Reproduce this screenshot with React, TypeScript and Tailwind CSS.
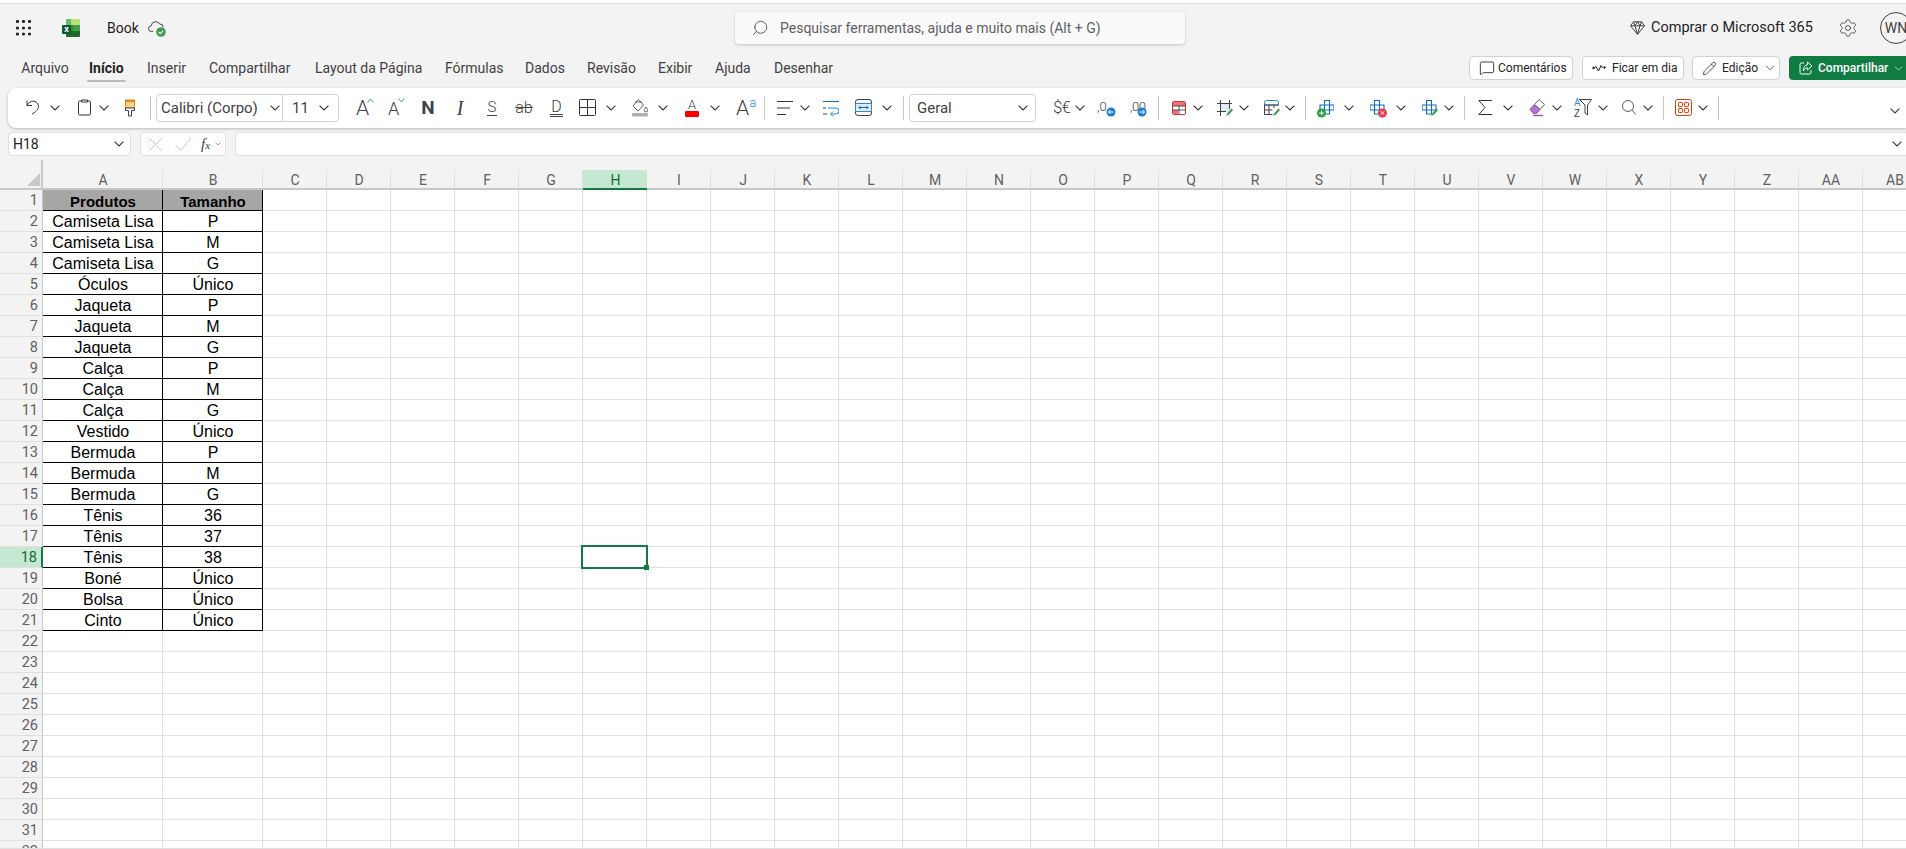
import { Search, Settings, Pencil, MessageSquare, ChevronDown } from "lucide-react";

const TABS = [
  { label: "Arquivo", cls: "w-[48px] ml-[21px]" },
  { label: "Início", cls: "w-[34px] ml-[20px] font-bold text-[#242424]" },
  { label: "Inserir", cls: "w-[38px] ml-[24px]" },
  { label: "Compartilhar", cls: "w-[80px] ml-[24px]" },
  { label: "Layout da Página", cls: "w-[105px] ml-[26px]" },
  { label: "Fórmulas", cls: "w-[56px] ml-[25px]" },
  { label: "Dados", cls: "w-[38px] ml-[24px]" },
  { label: "Revisão", cls: "w-[46px] ml-[24px]" },
  { label: "Exibir", cls: "w-[33px] ml-[25px]" },
  { label: "Ajuda", cls: "w-[35px] ml-[24px]" },
  { label: "Desenhar", cls: "w-[58px] ml-[24px]" },
];

const COLUMNS = "CDEFGHIJKLMNOPQRSTUVWXYZ".split("").concat(["AA", "AB"]);

const DATA = [
  ["Produtos", "Tamanho"],
  ["Camiseta Lisa", "P"],
  ["Camiseta Lisa", "M"],
  ["Camiseta Lisa", "G"],
  ["Óculos", "Único"],
  ["Jaqueta", "P"],
  ["Jaqueta", "M"],
  ["Jaqueta", "G"],
  ["Calça", "P"],
  ["Calça", "M"],
  ["Calça", "G"],
  ["Vestido", "Único"],
  ["Bermuda", "P"],
  ["Bermuda", "M"],
  ["Bermuda", "G"],
  ["Tênis", "36"],
  ["Tênis", "37"],
  ["Tênis", "38"],
  ["Boné", "Único"],
  ["Bolsa", "Único"],
  ["Cinto", "Único"],
];

const ROWS = Array.from({ length: 32 }, (_, i) => i + 1);

function Chev({ className = "" }: { className?: string }) {
  return (
    <svg width="10" height="6" viewBox="0 0 10 6" className={`shrink-0 ${className}`} fill="none" stroke="#333333" strokeWidth="1.1">
      <path d="M.6.6L5 5l4.400-4.400" />
    </svg>
  );
}

function Sep({ className = "" }: { className?: string }) {
  return <div className={`h-6 w-px shrink-0 bg-[#c8c8c8] ${className}`} />;
}

function Ic({ w, className = "", children }: { w: number; className?: string; children: React.ReactNode }) {
  return (
    <svg width={w} height="20" viewBox={`0 0 ${w} 20`} fill="none" className={`shrink-0 ${className}`}>
      {children}
    </svg>
  );
}

function GreenPencil({ x, y }: { x: number; y: number }) {
  return <path d={`M${x} ${y + 7}l1.5-3 4-4.5 1.6 1.4-4 4.6z`} fill="#3f9b4b" />;
}

function CrossOutline({ x = 3 }: { x?: number }) {
  return (
    <path
      d={`M${x + 4.5} 2.5h5v4.5h4.5v5h-4.5v4h-5v-4h-4.5v-5h4.5z M${x + 4.5} 7h5v5h-5z`}
      stroke="#0f6cbd"
      strokeWidth="1.1"
    />
  );
}

function Cell({ text, bold, last }: { text: string; bold?: boolean; last?: boolean }) {
  return (
    <div
      className={`flex h-full shrink-0 items-center justify-center border-r border-b border-black pl-[1px] pt-[2px] font-['Liberation_Sans',Arial,sans-serif] leading-none text-black ${
        bold ? "bg-[#a6a6a6] text-[15px] font-bold" : "bg-white text-[16px]"
      } ${last ? "w-[100px]" : "w-[120px]"}`}
    >
      {text}
    </div>
  );
}

export default function App() {
  return (
    <div className="flex h-[849px] w-[1906px] flex-col overflow-hidden bg-[#f3f3f3] font-['Roboto',sans-serif] text-[14px] text-[#424242]">
      <div className="h-[4px] shrink-0 border-b border-[#e0e0e0] bg-white" />

      {/* Title bar */}
      <div className="relative flex h-[48px] shrink-0 items-center">
        <svg width="16" height="16" viewBox="0 0 16 16" className="ml-[16px] shrink-0" fill="#242424">
          {[1.5, 8, 14].map((cy) =>
            [1.5, 7.5, 13.5].map((cx) => <circle key={`${cx}-${cy}`} cx={cx} cy={cy} r="1.6" />),
          )}
        </svg>
        <svg width="18" height="18" viewBox="0 0 18 18" className="ml-[30px] shrink-0">
          <path d="M4 1a1 1 0 0 1 1-1h4.5v6H4z" fill="#5fbf64" />
          <path d="M9.5 0H17a1 1 0 0 1 1 1v5H9.5z" fill="#b4e36f" />
          <rect x="4" y="6" width="7" height="6" fill="#2e8b3d" />
          <rect x="11" y="6" width="7" height="6" fill="#3f9f45" />
          <path d="M4 12h14v5a1 1 0 0 1-1 1H5a1 1 0 0 1-1-1z" fill="#1c6b2d" />
          <rect x="0" y="6" width="9" height="9" rx="1" fill="#0e5a30" />
          <text x="4.5" y="13.4" fontSize="9" fontWeight="700" fill="#fff" textAnchor="middle" fontFamily="Roboto, sans-serif">x</text>
        </svg>
        <span className="ml-[27px] w-[32px] text-[14px] text-[#242424]">Book</span>
        <svg width="18" height="18" viewBox="0 0 18 18" className="ml-[9px] shrink-0" fill="none">
          <path d="M5 12.5H3.6a2.9 2.9 0 0 1-.3-5.8A4.4 4.4 0 0 1 11.6 5a3.3 3.3 0 0 1 3.6 3" stroke="#424242" strokeWidth="1" />
          <circle cx="13" cy="13" r="4.8" fill="#3f9b57" />
          <path d="M10.8 13l1.6 1.6 2.8-3" stroke="#fff" strokeWidth="1.1" />
        </svg>

        {/* Search box sits in the middle of the bar */}
        <div className="absolute left-[735px] top-[8px] flex h-[32px] w-[450px] items-center rounded-[4px] bg-[#fafafa] shadow-[0_1px_3px_rgba(0,0,0,0.2)]">
          <Search size={18} strokeWidth={1.1} className="ml-[16px] -scale-x-100 text-[#424242]" />
          <span className="ml-[11px] whitespace-nowrap text-[14px] text-[#616161]">
            Pesquisar ferramentas, ajuda e muito mais (Alt + G)
          </span>
        </div>

        <div className="ml-auto flex items-center">
          <svg width="15" height="14" viewBox="0 0 15 14" fill="none" stroke="#424242" strokeWidth="1">
            <path d="M3.5.8h8l3 4-7 8.5-7-8.5z M.5 4.8h14 M5 4.8l2.5 8.5 2.5-8.5 M3.5.8L5 4.8l2.5-4 2.5 4 1.5-4" />
          </svg>
          <span className="ml-[6px] w-[156px] whitespace-nowrap text-[14.5px] text-[#242424]">Comprar o Microsoft 365</span>
          <Settings size={20} strokeWidth={1} className="ml-[31px] text-[#424242]" />
          <div className="-mr-[6px] ml-[22px] flex h-[32px] w-[32px] items-center justify-center rounded-full border border-[#424242] text-[14px] text-[#424242]">
            WN
          </div>
        </div>
      </div>

      {/* Tabs row */}
      <div className="flex h-[36px] shrink-0">
        <div className="flex h-[32px] items-center">
          {TABS.map((tab) => (
            <div key={tab.label} className={`relative shrink-0 whitespace-nowrap text-center ${tab.cls}`}>
              {tab.label}
              {tab.label === "Início" && (
                <div className="absolute -left-[2px] top-[22px] h-[2px] w-[39px] rounded-full bg-[#bdbdbd]" />
              )}
            </div>
          ))}
        </div>
        <div className="ml-auto flex h-[24px] translate-y-[4px] items-center text-[12px] text-[#242424]">
          <div className="flex h-full w-[104px] items-center rounded-[4px] border border-[#d1d1d1] bg-white">
            <MessageSquare size={16} strokeWidth={1.3} className="ml-[9px]" />
            <span className="ml-[3px]">Comentários</span>
          </div>
          <div className="ml-[9px] flex h-full w-[102px] items-center rounded-[4px] border border-[#d1d1d1] bg-white">
            <svg width="14" height="8" viewBox="0 0 14 8" className="ml-[9px]" fill="none" stroke="#242424">
              <circle cx="1.5" cy="4" r=".8" fill="#242424" />
              <path d="M2 4l2-1.5L6.5 7 9 1.5 10.5 4" />
              <circle cx="12.5" cy="3.5" r=".8" fill="#242424" />
            </svg>
            <span className="ml-[6px]">Ficar em dia</span>
          </div>
          <div className="ml-[8px] flex h-full w-[88px] items-center rounded-[4px] border border-[#d1d1d1] bg-white">
            <Pencil size={15} strokeWidth={1.2} className="ml-[9px]" />
            <span className="ml-[5px]">Edição</span>
            <ChevronDown size={14} strokeWidth={1.2} className="ml-[5px]" />
          </div>
          <div className="-mr-[5px] ml-[9px] flex h-full w-[122px] items-center rounded-[4px] bg-[#107c41] font-medium text-white">
            <svg width="14" height="14" viewBox="0 0 14 14" className="ml-[10px]" fill="none" stroke="#fff" strokeWidth="1">
              <path d="M5 2H2.500A1.500 1.500 0 0 0 1 3.500v8A1.500 1.500 0 0 0 2.500 13h8A1.500 1.500 0 0 0 12 11.500V9" />
              <path d="M8.500 1l4.500 4-4.500 4V6.800C6.500 6.800 5 8 4.500 10c-.2-4 1.500-6 4-6.200z" />
            </svg>
            <span className="ml-[5px]">Compartilhar</span>
            <ChevronDown size={13} strokeWidth={1.2} className="ml-[4px]" />
          </div>
        </div>
      </div>

      {/* Ribbon */}
      <div className="ml-[8px] flex h-[40px] shrink-0 items-center rounded-l-[8px] bg-white shadow-[0_1px_3px_rgba(0,0,0,0.25)]">
        <Ic w={14} className="ml-[18px]">
          <path d="M1 2.500v5h5 M1 7.500C3 4 6 2.500 9 3.500c3.500 1.300 4.300 5.500 2.500 8-1 1.500-3 3.200-5.500 4.500" stroke="#333333" />
        </Ic>
        <Chev className="ml-[10px]" />
        <Ic w={13} className="ml-[18px]">
          <path d="M3 3H1.800A1.300 1.300 0 0 0 .5 4.300v11.400A1.300 1.300 0 0 0 1.800 17h9.400a1.300 1.300 0 0 0 1.300-1.300V4.300A1.300 1.300 0 0 0 11.200 3H10 M3.500 2h6v2h-6z" stroke="#333333" />
        </Ic>
        <Chev className="ml-[8px]" />
        <Ic w={10} className="ml-[16px]">
          <rect x=".5" y="2" width="9" height="8" fill="#fbd38a" stroke="#e8861a" />
          <path d="M.5 2h9v2h-9z" fill="#e8861a" />
          <path d="M.5 10h9v2.500H6.500V18h-3v-5.500H.5z" fill="#fff" stroke="#424242" />
        </Ic>
        <Sep className="ml-[15px]" />

        <div className="ml-[5px] flex h-[28px] w-[183px] shrink-0 items-center rounded-[4px] border border-[#d1d1d1] text-[15px]">
          <div className="flex h-full w-[126px] items-center border-r border-[#d1d1d1] pl-[4px]">
            <span className="w-[109px] whitespace-nowrap">Calibri (Corpo)</span>
            <Chev />
          </div>
          <span className="ml-[9px] w-[26px]">11</span>
          <Chev className="ml-[1px]" />
        </div>

        <div className="ml-[17px] flex w-[17px] shrink-0 items-start font-light">
          <span className="text-[21px] leading-none">A</span>
          <svg width="7" height="5" viewBox="0 0 7 5" fill="none" stroke="#2b88d8" className="-ml-[2px] shrink-0"><path d="M.5 4.500L3.500 1l3 3.500" /></svg>
        </div>
        <div className="ml-[15px] flex w-[16px] shrink-0 items-start font-light">
          <span className="mt-[2px] text-[18px] leading-none">A</span>
          <svg width="7" height="5" viewBox="0 0 7 5" fill="none" stroke="#2b88d8" className="-ml-[1px] shrink-0"><path d="M.5.500l3 3.500 3-3.500" /></svg>
        </div>
        <span className="ml-[19px] flex w-[10px] shrink-0 justify-center text-[19px] font-bold">N</span>
        <span className="ml-[20px] flex w-[14px] shrink-0 justify-center border-b border-transparent font-['Liberation_Serif',serif] text-[20px] italic text-[#424242]">I</span>
        <span className="ml-[20px] flex h-[15px] w-[10px] shrink-0 items-center justify-center border-b border-[#424242] text-[15px] font-light">S</span>
        <span className="ml-[18px] flex w-[18px] shrink-0 justify-center text-[16px] font-light line-through">ab</span>
        <span className="ml-[17px] flex h-[17px] w-[13px] shrink-0 items-center justify-center border-b-[3px] border-double border-[#424242] text-[16px] font-light">D</span>

        <Ic w={17} className="ml-[16px]">
          <rect x=".5" y="1.500" width="16" height="16" rx="1" stroke="#333333" />
          <path d="M8.500 1.500v16 M.5 9.500h16" stroke="#333333" />
        </Ic>
        <Chev className="ml-[10px]" />
        <Ic w={16} className="ml-[16px]">
          <path d="M6.500 1.500L1 8l5 5 5.500-6z M3 4h7" stroke="#616161" />
          <path d="M14 9c1 1.500 1.700 2.300 1.700 3.200a1.700 1.700 0 0 1-3.400 0c0-.9.700-1.700 1.700-3.200z" stroke="#616161" />
          <rect x="0" y="15" width="16" height="3.500" rx="1" fill="#b0b0b0" />
        </Ic>
        <Chev className="ml-[10px]" />
        <div className="ml-[17px] flex h-[18px] w-[14px] shrink-0 flex-col items-center justify-between">
          <span className="text-[13px] font-light leading-[12px]">A</span>
          <div className="h-[6px] w-[14px] rounded-[1px] bg-[#ff0000]" />
        </div>
        <Chev className="ml-[11px]" />
        <div className="ml-[16px] flex w-[17px] shrink-0 items-start font-light">
          <span className="text-[21px] leading-none">A</span>
          <span className="-mt-[2px] text-[13px] leading-none text-[#2b88d8]">a</span>
        </div>
        <Sep className="ml-[11px]" />
        <Ic w={16} className="ml-[12px]">
          <path d="M0 3.500h16 M0 10h13 M0 16.500h9" stroke="#333333" />
        </Ic>
        <Chev className="ml-[7px]" />
        <Ic w={16} className="ml-[13px]">
          <path d="M0 3.500h16" stroke="#0f6cbd" />
          <path d="M0 10h3 M0 16h4" stroke="#424242" />
          <path d="M5 10h8a3 3 0 0 1 0 6H8 M10 13.500L7.500 16l2.500 2.500" stroke="#2b88d8" />
        </Ic>
        <Ic w={17} className="ml-[16px]">
          <rect x=".5" y="1.500" width="16" height="16" rx="2.500" stroke="#424242" />
          <path d="M.5 5.500h16v8H.5z" fill="#deecf9" stroke="#2b88d8" />
          <path d="M4 9.500h9 M5.500 8L4 9.500 5.500 11 M11.500 8l1.500 1.500-1.500 1.500" stroke="#0f6cbd" />
        </Ic>
        <Chev className="ml-[10px]" />
        <Sep className="ml-[11px]" />

        <div className="ml-[5px] flex h-[28px] w-[127px] shrink-0 items-center rounded-[4px] border border-[#d1d1d1] text-[15px]">
          <span className="ml-[7px] w-[101px]">Geral</span>
          <Chev />
        </div>

        <span className="ml-[17px] w-[14px] shrink-0 whitespace-nowrap text-[17px] font-light tracking-[-1px]">$€</span>
        <Chev className="ml-[8px]" />
        <div className="relative ml-[12px] h-[20px] w-[19px] shrink-0">
          <span className="absolute left-0 top-[2px] text-[13px] font-light leading-none">,0</span>
          <svg width="10" height="10" viewBox="0 0 10 10" className="absolute bottom-[1px] right-0">
            <circle cx="5" cy="5" r="4.500" fill="#1e7fd0" />
            <path d="M7.500 5h-5 M4.500 3L2.500 5l2 2" stroke="#fff" fill="none" />
          </svg>
        </div>
        <div className="relative ml-[14px] h-[20px] w-[17px] shrink-0">
          <span className="absolute left-0 top-[2px] text-[13px] font-light leading-none tracking-[-0.5px]">,00</span>
          <svg width="10" height="10" viewBox="0 0 10 10" className="absolute bottom-[1px] right-0">
            <circle cx="5" cy="5" r="4.500" fill="#1e7fd0" />
            <path d="M2.500 5h5 M5.500 3l2 2-2 2" stroke="#fff" fill="none" />
          </svg>
        </div>
        <Sep className="ml-[11px]" />
        <Ic w={14} className="ml-[13px]">
          <rect x=".5" y="3.500" width="13" height="13" rx="1.500" stroke="#d13438" />
          <path d="M1 4h12v4H1z M1 12h5v4H1z" fill="#f1707b" />
          <path d="M.5 8h13 M.5 12h13 M7 8v8" stroke="#424242" strokeWidth=".9" />
        </Ic>
        <Chev className="ml-[7px]" />
        <Ic w={16} className="ml-[14px]">
          <rect x="3" y="5" width="10" height="9" fill="#deecf9" />
          <path d="M0 5.500h15 M0 13.500h9 M3.500 2v16 M12.500 2v9" stroke="#424242" />
          <GreenPencil x={9} y={11} />
        </Ic>
        <Chev className="ml-[6px]" />
        <Ic w={16} className="ml-[15px]">
          <path d="M.5 7V4.500a2 2 0 0 1 2-2h10a2 2 0 0 1 2 2V7z" stroke="#2b88d8" />
          <path d="M.5 7v9.500h8 M.5 12h8 M5 7v9.500 M10 7v3 M.5 7h14" stroke="#424242" />
          <GreenPencil x={9} y={11} />
        </Ic>
        <Chev className="ml-[5px]" />
        <Sep className="ml-[10px]" />

        <Ic w={17} className="ml-[11px]">
          <CrossOutline />
          <circle cx="4.500" cy="15" r="4.500" fill="#2ea043" />
          <path d="M2.200 15h4.600 M4.500 12.700v4.600" stroke="#fff" />
        </Ic>
        <Chev className="ml-[10px]" />
        <Ic w={17} className="ml-[16px]">
          <CrossOutline x={0} />
          <circle cx="12.500" cy="15" r="4.500" fill="#e8384f" />
          <path d="M10.700 13.200l3.600 3.600 M14.300 13.200l-3.600 3.600" stroke="#fff" />
        </Ic>
        <Chev className="ml-[9px]" />
        <Ic w={17} className="ml-[16px]">
          <CrossOutline x={0} />
          <GreenPencil x={9} y={11} />
        </Ic>
        <Chev className="ml-[5px]" />
        <Sep className="ml-[10px]" />

        <Ic w={14} className="ml-[13px]">
          <path d="M14 2.500H.8L7 9.500l-6.200 7H14" stroke="#333333" />
        </Ic>
        <Chev className="ml-[11px]" />
        <Ic w={16} className="ml-[16px]">
          <path d="M5.500 6.500L10 1.500l5.500 5L11 11.500z" fill="#fff" stroke="#616161" />
          <path d="M1 11.500l4.500-5 5.500 5-3.500 4H4.500z" fill="#b373d1" stroke="#8a4fa8" />
          <path d="M4 17.500h10" stroke="#8a4fa8" strokeWidth="1.300" />
        </Ic>
        <Chev className="ml-[7px]" />
        <div className="relative ml-[12px] h-[20px] w-[18px] shrink-0">
          <span className="absolute left-0 top-[-1px] text-[10px] leading-[11px] text-[#2b88d8]">A</span>
          <span className="absolute left-0 top-[10px] text-[10px] leading-[11px]">Z</span>
          <svg width="13" height="18" viewBox="0 0 13 18" fill="none" stroke="#424242" className="absolute right-0 top-0">
            <path d="M.5 1.500h12L8.500 7v10L6 15V7z" />
          </svg>
        </div>
        <Chev className="ml-[6px]" />
        <Ic w={14} className="ml-[14px]">
          <circle cx="6" cy="8" r="5.500" stroke="#616161" />
          <path d="M10 12l3.800 4.500" stroke="#616161" />
        </Ic>
        <Chev className="ml-[7px]" />
        <Sep className="ml-[10px]" />
        <Ic w={17} className="ml-[11px]">
          <rect x=".5" y="1.500" width="16" height="16" rx="2" stroke="#d83b01" />
          <rect x="3.500" y="4.500" width="4" height="4" rx=".7" stroke="#d83b01" />
          <rect x="9.500" y="4.500" width="4" height="4" rx=".7" stroke="#d83b01" />
          <rect x="3.500" y="10.500" width="4" height="4" rx=".7" stroke="#d83b01" />
          <rect x="9.500" y="10.500" width="4" height="4" rx=".7" stroke="#d83b01" />
        </Ic>
        <Chev className="ml-[6px]" />
        <Sep className="ml-[10px]" />
        <Chev className="ml-auto mr-[6px] mt-[5px]" />
      </div>

      {/* Formula bar */}
      <div className="mt-[4px] flex h-[24px] shrink-0 items-center">
        <div className="ml-[8px] flex h-full w-[123px] items-center rounded-[4px] border border-[#e0e0e0] bg-white pl-[4px] text-[14px] text-[#242424]">
          <span className="w-[101px]">H18</span>
          <Chev />
        </div>
        <div className="ml-[9px] flex h-full w-[86px] items-center rounded-[4px] border border-[#e0e0e0] bg-white">
          <svg width="13" height="13" viewBox="0 0 13 13" className="ml-[8px] shrink-0" fill="none" stroke="#c4c4c4"><path d="M.5.5l12 12 M12.500.5l-12 12" /></svg>
          <svg width="16" height="13" viewBox="0 0 16 13" className="ml-[13px] shrink-0" fill="none" stroke="#c4c4c4"><path d="M.5 7l5 5.500L15.500.5" /></svg>
          <span className="ml-[10px] font-['Liberation_Serif',serif] text-[15px] italic text-[#424242]">f<span className="text-[11px]">x</span></span>
          <svg width="6" height="4" viewBox="0 0 6 4" className="ml-[5px] shrink-0" fill="none" stroke="#9e9e9e"><path d="M.5.500L3 3l2.500-2.500" /></svg>
        </div>
        <div className="ml-[9px] flex h-full flex-1 items-center justify-end rounded-l-[4px] border border-r-0 border-[#e0e0e0] bg-white pr-[4px]">
          <Chev />
        </div>
      </div>

      {/* Column headers */}
      <div className="mt-[4px] flex h-[30px] shrink-0 items-end border-b-2 border-[#c8c8c8] text-[14px] text-[#616161]">
        <div className="relative h-full w-[43px] shrink-0 border-r-2 border-[#c8c8c8]">
          <div className="absolute bottom-[2px] right-[1px] h-[13px] w-[13px] bg-[#c8c8c8] [clip-path:polygon(100%_0,100%_100%,0_100%)]" />
        </div>
        <div className="flex h-[18px] w-[120px] shrink-0 items-center justify-center border-r border-[#e0e0e0] pl-[1px] pt-[2px]">A</div>
        <div className="flex h-[18px] w-[100px] shrink-0 items-center justify-center border-r border-[#e0e0e0] pl-[1px] pt-[2px]">B</div>
        {COLUMNS.map((col) => (
          <div
            key={col}
            className={`flex h-[18px] w-[64px] shrink-0 items-center justify-center border-r pl-[1px] pt-[2px] ${
              col === "H"
                ? "-mb-[2px] h-[20px] border-b-2 border-r-0 border-b-[#107c41] bg-[#c6e8d3] text-[#0e6b38]"
                : "border-[#e0e0e0]"
            }`}
          >
            {col}
          </div>
        ))}
      </div>

      {/* Sheet */}
      <div className="h-[658px] shrink-0 overflow-hidden bg-white">
        {ROWS.map((row) => {
          const data = DATA[row - 1];
          return (
            <div key={row} className="flex h-[21px]">
              <div
                className={`flex h-full w-[43px] shrink-0 items-center justify-end border-r border-b pr-[4px] pt-[2px] text-[14.5px] ${
                  row === 18
                    ? "border-r-2 border-r-[#107c41] border-b-[#e0e0e0] bg-[#c6e8d3] text-[#0e6b38]"
                    : "border-r-[#c8c8c8] border-b-[#e0e0e0] bg-[#f3f3f3] text-[#616161]"
                }`}
              >
                {row}
              </div>
              {data ? (
                <>
                  <Cell text={data[0]} bold={row === 1} />
                  <Cell text={data[1]} bold={row === 1} last />
                </>
              ) : (
                <>
                  <div className="h-full w-[120px] shrink-0 border-r border-b border-[#e0e0e0]" />
                  <div className="h-full w-[100px] shrink-0 border-r border-b border-[#e0e0e0]" />
                </>
              )}
              {COLUMNS.map((col) => (
                <div key={col} className="relative h-full w-[64px] shrink-0 border-r border-b border-[#e0e0e0]">
                  {row === 18 && col === "H" && (
                    <div className="absolute -left-[2px] -top-[2px] z-10 h-[24px] w-[67px] border-2 border-[#107c41]">
                      <div className="absolute -bottom-[3px] -right-[3px] h-[5px] w-[5px] bg-[#107c41]" />
                    </div>
                  )}
                </div>
              ))}
            </div>
          );
        })}
      </div>
      <div className="flex-1 border-t border-[#e0e0e0] bg-[#f3f3f3]" />
    </div>
  );
}
